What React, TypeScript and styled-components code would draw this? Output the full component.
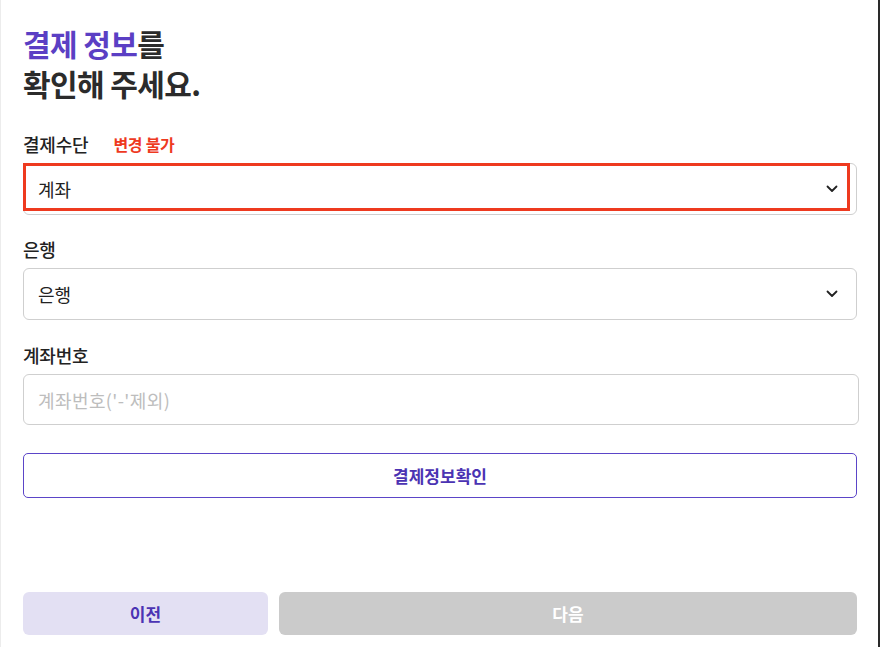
import React from "react";
import styled, { createGlobalStyle } from "styled-components";

const GlobalStyle = createGlobalStyle`
	* {
		box-sizing: border-box;
	}
	body {
		margin: 0;
		background: #ffffff;
		font-family: "Noto Sans CJK KR", "Noto Sans", sans-serif;
		color: #222222;
	}
`;

const Page = styled.div`
	width: 880px;
	min-height: 647px;
	display: flex;
	flex-direction: column;
	padding: 23px 0 12px 22px;
	border-left: 1px solid #ececec;
	border-right: 2px solid #2a2a2a;
	background: #ffffff;
`;

const Title = styled.h1`
	margin: 0;
	font-size: 30px;
	line-height: 40px;
	font-weight: 700;
	letter-spacing: -0.6px;
	color: #2b2b2b;
`;

const Accent = styled.span`
	color: #5b3fc4;
`;

const Field = styled.div<{ $top: number }>`
	display: flex;
	flex-direction: column;
	gap: 7px;
	margin-top: ${(p) => p.$top}px;
	width: 834px;
`;

const LabelRow = styled.div`
	display: flex;
	align-items: center;
	gap: 25px;
	height: 24px;
`;

const Label = styled.span`
	font-size: 18px;
	font-weight: 500;
	letter-spacing: -0.2px;
	color: #222222;
`;

const Warning = styled.span`
	font-size: 16px;
	font-weight: 700;
	letter-spacing: -0.3px;
	color: #ee3a1f;
`;

const SelectWrap = styled.div`
	position: relative;
`;

const SelectBox = styled.div`
	height: 52px;
	display: flex;
	align-items: center;
	justify-content: space-between;
	padding: 0 18px 0 14px;
	border: 1px solid #cfcfcf;
	border-radius: 6px;
	font-size: 18px;
	color: #222222;
`;

const LockedMark = styled.div`
	position: absolute;
	left: 0;
	top: 0;
	width: 827px;
	height: 48px;
	border: 3px solid #ee3a1f;
	pointer-events: none;
`;

const TextInput = styled.input`
	width: 836px;
	height: 51px;
	padding: 0 14px;
	border: 1px solid #cfcfcf;
	border-radius: 6px;
	font-family: inherit;
	font-size: 18px;
	color: #222222;
	outline: none;
	&::placeholder {
		color: #bdbdbd;
		letter-spacing: 0.4px;
	}
`;

const CheckButton = styled.button`
	margin-top: 28px;
	width: 834px;
	height: 45px;
	border: 1.5px solid #5b45c8;
	border-radius: 5px;
	background: #ffffff;
	font-family: inherit;
	font-size: 17px;
	font-weight: 700;
	color: #4b33b3;
`;

const Footer = styled.div`
	margin-top: auto;
	width: 834px;
	display: grid;
	grid-template-columns: 245px 1fr;
	gap: 11px;
`;

const NavButton = styled.button<{ $primary?: boolean }>`
	height: 43px;
	border: none;
	border-radius: 6px;
	font-family: inherit;
	font-size: 17px;
	font-weight: 700;
	background: ${(p) => (p.$primary ? "#cbcbcb" : "#e3e0f3")};
	color: ${(p) => (p.$primary ? "#ffffff" : "#4b33b3")};
`;

const Chevron = () => (
	<svg width="12" height="8" viewBox="0 0 12 8" fill="none">
		<polyline points="1.5,1.5 6,6 10.5,1.5" stroke="#222" strokeWidth="1.8" strokeLinecap="round" strokeLinejoin="round" />
	</svg>
);

const App: React.FC = () => {
	return (
		<>
			<GlobalStyle />
			<Page>
				<Title>
					<Accent>결제 정보</Accent>를
					<br />
					확인해 주세요.
				</Title>

				<Field $top={29}>
					<LabelRow>
						<Label>결제수단</Label>
						<Warning>변경 불가</Warning>
					</LabelRow>
					<SelectWrap>
						<SelectBox>
							계좌
							<Chevron />
						</SelectBox>
						<LockedMark />
					</SelectWrap>
				</Field>

				<Field $top={22}>
					<LabelRow>
						<Label>은행</Label>
					</LabelRow>
					<SelectBox>
						은행
						<Chevron />
					</SelectBox>
				</Field>

				<Field $top={23}>
					<LabelRow>
						<Label>계좌번호</Label>
					</LabelRow>
					<TextInput placeholder="계좌번호('-'제외)" />
				</Field>

				<CheckButton>결제정보확인</CheckButton>

				<Footer>
					<NavButton>이전</NavButton>
					<NavButton $primary>다음</NavButton>
				</Footer>
			</Page>
		</>
	);
};

export default App;
